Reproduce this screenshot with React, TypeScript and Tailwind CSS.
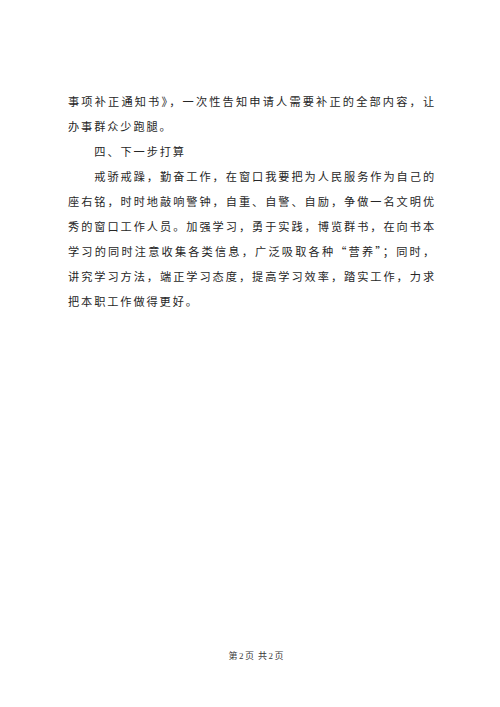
const font = { fontFamily: '"Noto Sans CJK SC", "Noto Sans", sans-serif' };

type Para = { indent: boolean; lines: string[] };

const paras: Para[] = [
  {
    indent: false,
    lines: ['事项补正通知书》，一次性告知申请人需要补正的全部内容，让', '办事群众少跑腿。'],
  },
  { indent: true, lines: ['四、下一步打算'] },
  {
    indent: true,
    lines: [
      '戒骄戒躁，勤奋工作，在窗口我要把为人民服务作为自己的',
      '座右铭，时时地敲响警钟，自重、自警、自励，争做一名文明优',
      '秀的窗口工作人员。加强学习，勇于实践，博览群书，在向书本',
      '学习的同时注意收集各类信息，广泛吸取各种“营养”；同时，',
      '讲究学习方法，端正学习态度，提高学习效率，踏实工作，力求',
      '把本职工作做得更好。',
    ],
  },
];

function Paragraph({ para }: { para: Para }) {
  return (
    <div>
      {para.lines.map((line, i) => {
        const full = i < para.lines.length - 1;
        return (
          <div
            key={line}
            className={`whitespace-nowrap ${i === 0 && para.indent ? 'pl-[26.3px]' : ''} ${
              full ? 'text-justify [text-align-last:justify]' : 'text-left'
            }`}
          >
            {line}
          </div>
        );
      })}
    </div>
  );
}

export default function App() {
  return (
    <div className="flex h-[707px] w-[500px] flex-col bg-white" style={font}>
      <div className="ml-[68px] mt-[89px] w-[368px] text-[11.2px] leading-[25px] tracking-[1.9px] text-[#262626]">
        {paras.map((p, i) => (
          <Paragraph key={i} para={p} />
        ))}
      </div>
      <div
        className="mt-auto flex justify-center gap-[4px] pb-[44px] pl-[12px] text-[9px] leading-[14px] text-[#3a3a3a]"
        style={{ fontFamily: '"Liberation Serif", "Noto Sans CJK SC", serif' }}
      >
        <span className="flex gap-[1.5px]">
          <span>第</span>
          <span>2</span>
          <span>页</span>
        </span>
        <span className="flex gap-[1.5px]">
          <span>共</span>
          <span>2</span>
          <span>页</span>
        </span>
      </div>
    </div>
  );
}
